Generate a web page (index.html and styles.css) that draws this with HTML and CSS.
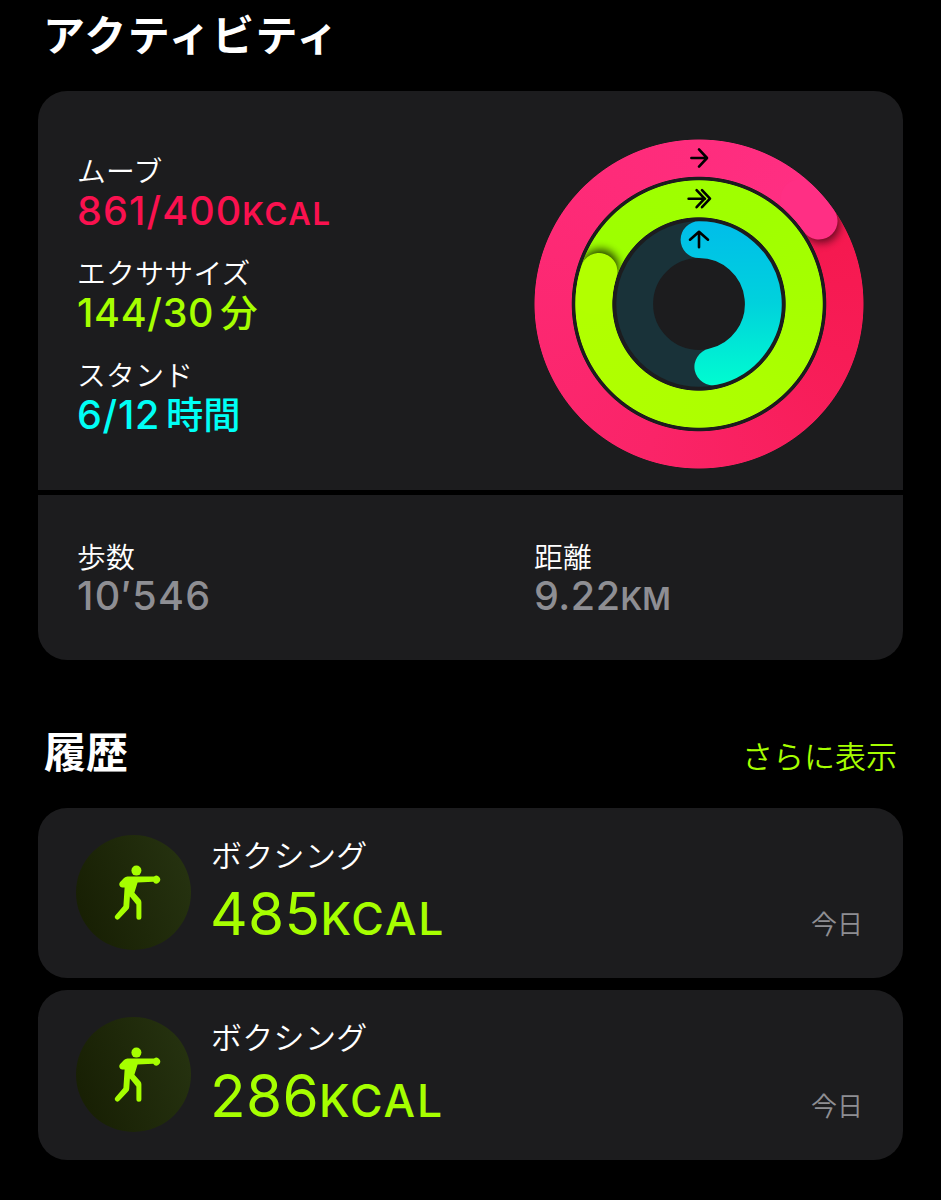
FILE: index.html
```html
<!DOCTYPE html>
<html lang="ja">
<head>
    <meta charset="UTF-8">
    <meta name="viewport" content="width=device-width, initial-scale=1.0">
    <title>アクティビティ</title>
    <link rel="stylesheet" href="styles.css">
</head>
<body>
    <h2 class="title wide">アクティビティ</h2>

    <section class="card summary">
        <div class="goals">
            <div class="metrics">
                <div class="metric">
                    <div class="label">ムーブ</div>
                    <div class="value move">861/400<span class="unit">KCAL</span></div>
                </div>
                <div class="metric">
                    <div class="label">エクササイズ</div>
                    <div class="value exercise">144/30<span class="kanji">分</span></div>
                </div>
                <div class="metric">
                    <div class="label">スタンド</div>
                    <div class="value stand">6/12<span class="kanji">時間</span></div>
                </div>
            </div>

            <div class="rings">
                <div class="ring ring-move"></div>
                <div class="ring ring-exercise"></div>
                <svg class="ring-top" viewBox="-165 -165 330 330">
                    <defs>
                        <filter id="blur" x="-50%" y="-50%" width="200%" height="200%">
                            <feGaussianBlur stdDeviation="4"/>
                        </filter>
                        <clipPath id="moveBand">
                            <path clip-rule="evenodd" d="M0-164.5a164.5 164.5 0 1 1 0 329a164.5 164.5 0 1 1 0-329zM0-127.3a127.3 127.3 0 1 1 0 254.6a127.3 127.3 0 1 1 0-254.6z"/>
                        </clipPath>
                        <clipPath id="exerciseBand">
                            <path clip-rule="evenodd" d="M0-123.7a123.7 123.7 0 1 1 0 247.4a123.7 123.7 0 1 1 0-247.4zM0-86.7a86.7 86.7 0 1 1 0 173.4a86.7 86.7 0 1 1 0-173.4z"/>
                        </clipPath>
                        <linearGradient id="standFill" gradientUnits="userSpaceOnUse" x1="0" y1="-83" x2="0" y2="83">
                            <stop offset="0" stop-color="#00bdea"/>
                            <stop offset="0.5" stop-color="#00d2dc"/>
                            <stop offset="1" stop-color="#00fdd0"/>
                        </linearGradient>
                    </defs>

                    <!-- move: end cap with its shadow -->
                    <g clip-path="url(#moveBand)">
                        <g transform="rotate(55.3)">
                            <circle cx="4" cy="-145.9" r="18.6" fill="#000" opacity="0.6" filter="url(#blur)"/>
                            <path d="M-30-142.8A145.9 145.9 0 0 1 0-145.9" fill="none" stroke="#ff2f84" stroke-width="37.2" stroke-linecap="round"/>
                        </g>
                    </g>

                    <!-- exercise: end cap with its shadow -->
                    <g clip-path="url(#exerciseBand)">
                        <g transform="rotate(288)">
                            <circle cx="4" cy="-105.2" r="18.5" fill="#000" opacity="0.75" filter="url(#blur)"/>
                            <path d="M-25-102.2A105.2 105.2 0 0 1 0-105.2" fill="none" stroke="#b2ff00" stroke-width="37" stroke-linecap="round"/>
                        </g>
                    </g>

                    <!-- stand -->
                    <circle r="64.3" fill="none" stroke="#193239" stroke-width="36.8"/>
                    <path d="M0-64.3A64.3 64.3 0 0 1 13.8 62.8" fill="none" stroke="url(#standFill)" stroke-width="36.8" stroke-linecap="round"/>

                    <g class="arrows">
                        <path d="M-7.6-146H7.6M0-154.6L8-146L0-137.4"/>
                        <path d="M-10.4-105.3H6M-2.4-113.8L5.6-105.3L-2.4-96.8M3-113.8L11-105.3L3-96.8"/>
                        <path d="M0-56.8V-71.8M-9-64.3L0-72.2L9-64.3"/>
                    </g>
                </svg>
            </div>
        </div>

        <div class="totals">
            <div class="total">
                <div class="label">歩数</div>
                <div class="value muted steps">10′546</div>
            </div>
            <div class="total">
                <div class="label">距離</div>
                <div class="value muted distance">9.22<span class="unit">KM</span></div>
            </div>
        </div>
    </section>

    <div class="history-head">
        <h2 class="title">履歴</h2>
        <a class="more">さらに表示</a>
    </div>

    <section class="card workout">
        <div class="badge">
            <svg viewBox="0 0 48 56"><use href="#boxer"/></svg>
        </div>
        <div class="info">
            <div class="name">ボクシング</div>
            <div class="energy">485<span class="unit">KCAL</span></div>
        </div>
        <div class="day">今日</div>
    </section>

    <section class="card workout">
        <div class="badge">
            <svg viewBox="0 0 48 56">
                <g id="boxer">
                    <circle cx="23.4" cy="5.6" r="5"/>
                    <path d="M14.5 11.6H41a3.8 3.8 0 1 1-.8 5.2L24.6 17.6L21.4 27.7L27.4 34.6Q28.4 35.8 28.4 37.4V52.2a2.5 2.5 0 0 1-5 0V39.6L16.9 31.6L16.2 42Q16 43.5 15 44.5L6.5 53.6a2.5 2.5 0 0 1-4-3.4L10.4 41L11.6 22.4L9.2 22.5a3.2 3.2 0 0 1-2-5.4L11 13.1Q12.5 11.6 14.5 11.6z"/>
                </g>
            </svg>
        </div>
        <div class="info">
            <div class="name">ボクシング</div>
            <div class="energy">286<span class="unit">KCAL</span></div>
        </div>
        <div class="day">今日</div>
    </section>
</body>
</html>
```

FILE: styles.css
```css
* { box-sizing: border-box; }
body {
    margin: 0; padding: 11px 38px 0;
    background: #000; color: #fff;
    font-family: Inter, "Noto Sans CJK JP", sans-serif;
}
.title { margin: 0 6px; font-size: 42px; line-height: 50px; font-weight: 700; }
.title.wide { margin-left: 5px; letter-spacing: 1.4px; }
.card { background: #1c1c1e; border-radius: 29px; }

/* activity summary */
.summary { margin-top: 30px; }
.goals {
    display: flex; justify-content: space-between;
    height: 404px; padding: 48px 39px 0;
    border-bottom: 5px solid #000;
}
.metrics { padding-top: 15px; }
.metric { height: 102px; }
.label { font-size: 28.8px; line-height: 36px; font-weight: 350; letter-spacing: 0.3px; }
.value { font-size: 39.5px; line-height: 42px; font-weight: 500; letter-spacing: 0.7px; white-space: nowrap; }
.value .unit { font-size: 31px; font-weight: 600; letter-spacing: 1.6px; }
.value .kanji { font-size: 37.3px; margin-left: 6px; letter-spacing: 0; }
.value.move { letter-spacing: 1.1px; }
.value.steps { letter-spacing: 1.3px; }
.value.distance { letter-spacing: 0.5px; }
.distance .unit { letter-spacing: 0; }
.move { color: #fa114f; }
.exercise { color: #a6ff00; }
.stand { color: #00fff6; }
.muted { color: #8e8e93; }

.rings { display: grid; width: 330px; height: 330px; }
.rings > * { grid-area: 1 / 1; width: 330px; height: 330px; }
.ring-move {
    background: conic-gradient(from 55deg, #f5184e, #f71c56 15%, #fa2468 40%, #fe2b79 75%, #ff2f84);
    -webkit-mask: radial-gradient(circle, transparent 126.9px, #000 127.7px, #000 164.1px, transparent 164.9px);
    mask: radial-gradient(circle, transparent 126.9px, #000 127.7px, #000 164.1px, transparent 164.9px);
}
.ring-exercise {
    background: conic-gradient(from 288deg, #9dff00, #a0ff00 30%, #acff00 60%, #b2ff00);
    -webkit-mask: radial-gradient(circle, transparent 86.3px, #000 87.1px, #000 123.3px, transparent 124.1px);
    mask: radial-gradient(circle, transparent 86.3px, #000 87.1px, #000 123.3px, transparent 124.1px);
}
.ring-top { z-index: 1; }
.arrows { fill: none; stroke: #000; stroke-width: 2.6; stroke-linecap: round; stroke-linejoin: round; }

.totals { display: grid; grid-template-columns: 457px 1fr; height: 165px; padding: 45px 39px 0; }
.totals .value { line-height: 40px; }

/* history */
.history-head { display: flex; justify-content: space-between; align-items: center; height: 50px; margin-top: 68px; }
.more { margin: 8px 6px 0 0; color: #a6ff00; font-size: 31px; line-height: 48px; font-weight: 350; }
.workout { display: flex; height: 170px; padding: 27px 40px 0 38px; margin-top: 12px; }
.history-head + .workout { margin-top: 30px; }
.badge {
    display: flex; align-items: center; justify-content: center;
    width: 115px; height: 115px; border-radius: 50%;
    background: linear-gradient(70deg, #161d02, #273411);
}
.badge svg { width: 48px; height: 56px; margin-left: 7px; fill: #a6ff00; }
.info { flex: 1; margin-left: 20px; }
.name { font-size: 31px; line-height: 42px; font-weight: 350; letter-spacing: 0.3px; }
.energy { margin-left: -1px; color: #a6ff00; font-size: 58.5px; line-height: 73px; font-weight: 400; letter-spacing: 0.3px; }
.energy .unit { font-size: 44.5px; font-weight: 500; letter-spacing: 1.9px; }
.day { align-self: flex-end; margin-bottom: 34px; color: #8e8e93; font-size: 26px; line-height: 38px; font-weight: 350; }
```
